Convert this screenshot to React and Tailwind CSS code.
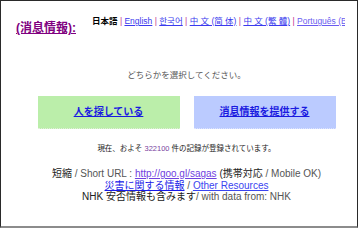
export default function App() {
  const jp = { fontFamily: '"Liberation Sans", "Noto Sans CJK JP", sans-serif' };
  return (
    <div
      className="w-[358px] h-[228px] bg-white border-t border-l border-r border-b-2 border-t-[#2a2a2a] border-l-[#2a2a2a] border-r-[#2a2a2a] border-b-[#8c8c8c] overflow-hidden"
      style={jp}
    >
      <div className="flex items-start pt-[15px]">
        <a
          href="#"
          className="ml-[15px] mt-[5px] text-[12px] leading-[14px] font-bold text-[#800080] underline whitespace-nowrap"
        >
          (消息情報):
        </a>
        <div className="ml-[16px] w-[253px] overflow-hidden whitespace-nowrap text-[8.5px] leading-[10px] text-[#3a3aee]">
          <span className="font-bold text-black">日本語</span>
          <span className="text-[#c03090]"> | </span>
          <a href="#" className="underline">English</a>
          <span className="text-[#c03090]"> | </span>
          <a href="#" className="underline">한국어</a>
          <span className="text-[#c03090]"> | </span>
          <a href="#" className="underline">中 文 (简 体)</a>
          <span className="text-[#c03090]"> | </span>
          <a href="#" className="underline">中 文 (繁 體)</a>
          <span className="text-[#c03090]"> | </span>
          <a href="#" className="underline text-[#6a5cf0]">Português (Brasil)</a>
        </div>
      </div>

      <div className="pl-[15px] text-center">
        <div className="mt-[34px] text-[8.5px] leading-[12px] text-[#555]">
          どちらかを選択してください。
        </div>
        <div className="mt-[15px] flex justify-center gap-[14px]">
          <div className="w-[142px] h-[33px] bg-[#bbeeaa] border-b border-dotted border-b-[#e0f0d8] flex items-center justify-center">
            <a href="#" className="text-[10px] leading-[12px] font-bold text-[#1a1ae0] underline">
              人を探している
            </a>
          </div>
          <div className="w-[142px] h-[33px] bg-[#bbcbff] border-b border-dotted border-b-[#dde4ff] flex items-center justify-center">
            <a href="#" className="text-[10px] leading-[12px] font-bold text-[#1a1ae0] underline">
              消息情報を提供する
            </a>
          </div>
        </div>
        <div className="mt-[15px] text-[7.5px] leading-[10px] text-[#222]">
          現在、およそ <span className="text-[#7a3fa0]">322100</span> 件の記録が登録されています。
        </div>
        <div className="mt-[14px] text-[10px] leading-[11.5px] text-[#555]">
          <div className="whitespace-nowrap">
            <span className="text-[#222]">短縮</span> / Short URL :{" "}
            <a href="#" className="underline text-[#7040e0]">http://goo.gl/sagas</a>{" "}
            <span className="text-[#222]">(携帯対応</span> / Mobile OK)
          </div>
          <div className="whitespace-nowrap">
            <a href="#" className="underline text-[#1a1ae8]">災害に関する情報</a> /{" "}
            <a href="#" className="underline text-[#3a45f0]">Other Resources</a>
          </div>
          <div className="whitespace-nowrap text-[#222]">
            NHK 安否情報も含みます<span className="text-[#555]">/ with data from: NHK</span>
          </div>
        </div>
      </div>
    </div>
  );
}
